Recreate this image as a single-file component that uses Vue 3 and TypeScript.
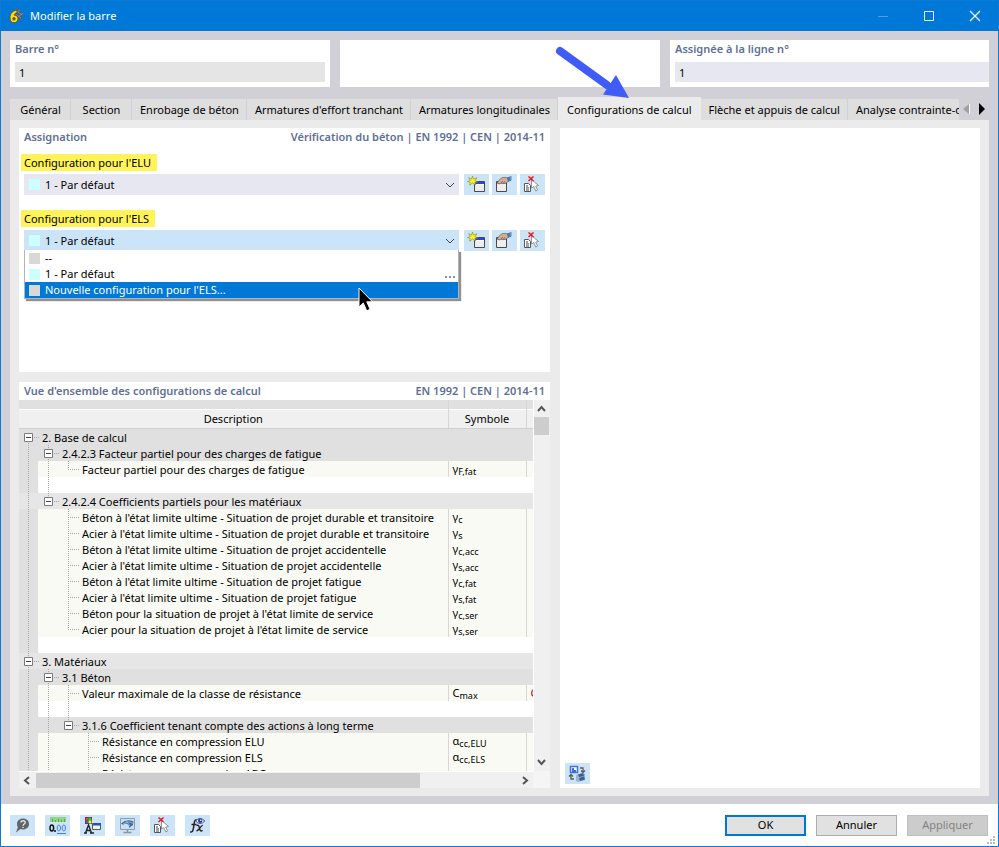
<script setup lang="ts">
import { ref } from 'vue'

type Guide = 'none' | 'trunk' | 'tee' | 'end' | 'root' | 'mid' | 'last'

interface Row {
  kind: 'group' | 'leaf' | 'gap'
  guides: Guide[]
  text?: string
  light?: boolean
  symbol?: string
  sub?: string
  extra?: string
}

const tabs = [
  'Général',
  'Section',
  'Enrobage de béton',
  "Armatures d'effort tranchant",
  'Armatures longitudinales',
  'Configurations de calcul',
  'Flèche et appuis de calcul',
  'Analyse contrainte-déformation',
]
const activeTab = ref(5)

const uls = ref('1 - Par défaut')
const sls = ref('1 - Par défaut')

const options = [
  { label: '--', color: 'grey' },
  { label: '1 - Par défaut', color: 'cyan', more: true },
  { label: "Nouvelle configuration pour l'ELS...", color: 'grey' },
]
const hovered = ref(2)

const rows: Row[] = [
  { kind: 'group', guides: ['root'], text: '2. Base de calcul' },
  { kind: 'group', guides: ['trunk', 'mid'], text: '2.4.2.3 Facteur partiel pour des charges de fatigue' },
  { kind: 'leaf', guides: ['trunk', 'trunk', 'end'], text: 'Facteur partiel pour des charges de fatigue', symbol: 'γ', sub: 'F,fat' },
  { kind: 'gap', guides: ['trunk', 'trunk'] },
  { kind: 'group', guides: ['trunk', 'last'], text: '2.4.2.4 Coefficients partiels pour les matériaux', light: true },
  { kind: 'leaf', guides: ['trunk', 'none', 'tee'], text: "Béton à l'état limite ultime - Situation de projet durable et transitoire", symbol: 'γ', sub: 'c' },
  { kind: 'leaf', guides: ['trunk', 'none', 'tee'], text: "Acier à l'état limite ultime - Situation de projet durable et transitoire", symbol: 'γ', sub: 's' },
  { kind: 'leaf', guides: ['trunk', 'none', 'tee'], text: "Béton à l'état limite ultime - Situation de projet accidentelle", symbol: 'γ', sub: 'c,acc' },
  { kind: 'leaf', guides: ['trunk', 'none', 'tee'], text: "Acier à l'état limite ultime - Situation de projet accidentelle", symbol: 'γ', sub: 's,acc' },
  { kind: 'leaf', guides: ['trunk', 'none', 'tee'], text: "Béton à l'état limite ultime - Situation de projet fatigue", symbol: 'γ', sub: 'c,fat' },
  { kind: 'leaf', guides: ['trunk', 'none', 'tee'], text: "Acier à l'état limite ultime - Situation de projet fatigue", symbol: 'γ', sub: 's,fat' },
  { kind: 'leaf', guides: ['trunk', 'none', 'tee'], text: "Béton pour la situation de projet à l'état limite de service", symbol: 'γ', sub: 'c,ser' },
  { kind: 'leaf', guides: ['trunk', 'none', 'end'], text: "Acier pour la situation de projet à l'état limite de service", symbol: 'γ', sub: 's,ser' },
  { kind: 'gap', guides: ['trunk'] },
  { kind: 'group', guides: ['mid'], text: '3. Matériaux', light: true },
  { kind: 'group', guides: ['trunk', 'mid'], text: '3.1 Béton' },
  { kind: 'leaf', guides: ['trunk', 'trunk', 'tee'], text: 'Valeur maximale de la classe de résistance', symbol: 'C', sub: 'max', extra: 'C' },
  { kind: 'gap', guides: ['trunk', 'trunk', 'trunk'] },
  { kind: 'group', guides: ['trunk', 'trunk', 'last'], text: '3.1.6 Coefficient tenant compte des actions à long terme' },
  { kind: 'leaf', guides: ['trunk', 'trunk', 'none', 'tee'], text: 'Résistance en compression ELU', symbol: 'α', sub: 'cc,ELU' },
  { kind: 'leaf', guides: ['trunk', 'trunk', 'none', 'tee'], text: 'Résistance en compression ELS', symbol: 'α', sub: 'cc,ELS' },
  { kind: 'leaf', guides: ['trunk', 'trunk', 'none', 'tee'], text: 'Résistance en compression ABC', symbol: 'α', sub: 'cc,ABC' },
]

const isToggle = (g: Guide) => g === 'root' || g === 'mid' || g === 'last'
</script>

<template>
  <div class="window">
    <header class="titlebar">
      <svg class="logo" width="16" height="16" viewBox="0 0 16 16">
        <path d="M4 4 10 1l5 4-1 6-4 1z" fill="#36628f" stroke="#52657c" />
        <path d="m5 4 8 6M7 2l7 5M12 2 6 6M15 5l-6 5" stroke="#8aa0b8" stroke-width=".7" />
        <path d="M9 2.500C5 2 2 5.500 2 10c0 3 1.500 4.700 4 4.700S10 13 10 10.600 8.300 7 6.300 7.200C6.500 5.600 7.500 4.800 9 4.700z" fill="#ffd51f" stroke="#6b5200" stroke-width=".9" />
        <circle cx="6" cy="10.800" r="1.300" fill="#2d5e94" stroke="#6b5200" stroke-width=".7" />
      </svg>
      <h1>Modifier la barre</h1>
      <div class="winbuttons">
        <button type="button" aria-label="Réduire" disabled>
          <svg width="12" height="12"><path d="M1 6.500h10" stroke="#4aa0e6" /></svg>
        </button>
        <button type="button" aria-label="Agrandir">
          <svg width="12" height="12"><path d="M1.500 1.500h9v9h-9z" fill="none" stroke="#fff" /></svg>
        </button>
        <button type="button" aria-label="Fermer">
          <svg width="12" height="12"><path d="m1 1 10 10M11 1 1 11" stroke="#fff" stroke-width="1.200" /></svg>
        </button>
      </div>
    </header>

    <main class="body">
      <div class="fields">
        <div class="field">
          <label for="barre">Barre n°</label>
          <input id="barre" type="text" value="1" readonly />
        </div>
        <div class="field"></div>
        <div class="field flush">
          <label for="ligne">Assignée à la ligne n°</label>
          <input id="ligne" class="lilac" type="text" value="1" />
        </div>
      </div>

      <div class="tabrow">
        <div class="tabs" role="tablist">
          <button
            v-for="(tab, i) in tabs"
            :key="tab"
            type="button"
            role="tab"
            class="tab"
            :class="{ active: i === activeTab }"
            :aria-selected="i === activeTab"
            @click="activeTab = i"
          >{{ tab }}</button>
        </div>
        <button type="button" class="tabnav" aria-label="Onglets précédents">
          <svg width="8" height="12"><path d="M6 1v10L0 6z" fill="#a0a0a0" /><path d="M6.500 1v10" stroke="#fff" /></svg>
        </button>
        <button type="button" class="tabnav" aria-label="Onglets suivants">
          <svg width="8" height="12"><path d="M1 0v12l6-6z" fill="#000" /></svg>
        </button>
      </div>

      <div class="content">
        <div class="left">
          <section class="panel">
            <div class="heading">
              <h2>Assignation</h2>
              <h2>Vérification du béton | EN 1992 | CEN | 2014-11</h2>
            </div>

            <div class="setting">
              <label class="mark" for="elu">Configuration pour l'ELU</label>
              <div class="line">
                <div class="combo">
                  <span class="swatch cyan"></span>
                  <select id="elu" v-model="uls"><option>1 - Par défaut</option></select>
                  <svg class="chev" width="10" height="6"><path d="m1 1 4 4 4-4" fill="none" stroke="#444" /></svg>
                </div>
                <button type="button" class="tool" aria-label="Nouvelle configuration"><svg width="19" height="17"><use href="#i-new" /></svg></button>
                <button type="button" class="tool" aria-label="Modifier la configuration"><svg width="19" height="17"><use href="#i-edit" /></svg></button>
                <button type="button" class="tool" aria-label="Sélectionner"><svg width="19" height="17"><use href="#i-pick" /></svg></button>
              </div>
            </div>

            <div class="setting">
              <label class="mark" for="els">Configuration pour l'ELS</label>
              <div class="line">
                <div class="combo open">
                  <span class="swatch cyan"></span>
                  <select id="els" v-model="sls"><option>1 - Par défaut</option></select>
                  <svg class="chev" width="10" height="6"><path d="m1 1 4 4 4-4" fill="none" stroke="#444" /></svg>
                  <ul class="menu" role="listbox" aria-label="Configuration pour l'ELS">
                    <li
                      v-for="(o, i) in options"
                      :key="o.label"
                      role="option"
                      :aria-selected="i === hovered"
                      :class="{ hot: i === hovered }"
                      @mouseenter="hovered = i"
                    >
                      <span class="swatch" :class="o.color"></span>
                      <span class="optlabel">{{ o.label }}</span>
                      <svg v-if="o.more" class="more" width="10" height="2"><path d="M0 0h2v2H0zM4 0h2v2H4zM8 0h2v2H8z" fill="#909090" /></svg>
                    </li>
                  </ul>
                  <svg class="cursor" width="16" height="26" viewBox="0 0 16 26">
                    <path d="M1 1v19l4.300-4 3.400 7.800 3.400-1.500-3.300-7.500H14.500z" fill="#000" stroke="#fff" />
                  </svg>
                </div>
                <button type="button" class="tool" aria-label="Nouvelle configuration"><svg width="19" height="17"><use href="#i-new" /></svg></button>
                <button type="button" class="tool" aria-label="Modifier la configuration"><svg width="19" height="17"><use href="#i-edit" /></svg></button>
                <button type="button" class="tool" aria-label="Sélectionner"><svg width="19" height="17"><use href="#i-pick" /></svg></button>
              </div>
            </div>
          </section>

          <section class="panel overview">
            <div class="heading">
              <h2>Vue d'ensemble des configurations de calcul</h2>
              <h2>EN 1992 | CEN | 2014-11</h2>
            </div>
            <div class="sheet">
              <div class="viewport">
                <table>
                  <colgroup><col /><col class="c-symbol" /><col class="c-rest" /></colgroup>
                  <thead>
                    <tr class="strip"><td></td><td></td><td></td></tr>
                    <tr class="titles"><th scope="col">Description</th><th scope="col">Symbole</th><td></td></tr>
                  </thead>
                  <tbody>
                    <tr v-for="(row, r) in rows" :key="r" :class="[row.kind, { light: row.light }]">
                      <td>
                        <div class="cell">
                          <span v-for="(g, k) in row.guides" :key="k" class="guide" :class="g">
                            <button v-if="isToggle(g)" type="button" class="toggle" :aria-label="'Réduire ' + row.text">
                              <svg width="9" height="9"><path d="M.5.5h8v8h-8z" fill="#fff" stroke="#7a7a7a" /><path d="M2 4.500h5" stroke="#444" /></svg>
                            </button>
                          </span>
                          <span class="name">{{ row.text }}</span>
                        </div>
                      </td>
                      <td class="symbol"><template v-if="row.symbol">{{ row.symbol }}<small>{{ row.sub }}</small></template></td>
                      <td class="extra">{{ row.extra }}</td>
                    </tr>
                  </tbody>
                </table>
              </div>
              <div class="vbar">
                <svg width="15" height="17"><path d="m4 11 3.500-4 3.500 4" fill="none" stroke="#555" stroke-width="2" /></svg>
                <div class="vtrack"><div class="vthumb"></div></div>
                <svg width="15" height="17"><path d="m4 6 3.500 4L11 6" fill="none" stroke="#555" stroke-width="2" /></svg>
              </div>
              <div class="hbar">
                <svg width="17" height="15"><path d="M10 4 6 7.500l4 3.500" fill="none" stroke="#555" stroke-width="2" /></svg>
                <div class="htrack"><div class="hthumb"></div></div>
                <svg width="17" height="15"><path d="m7 4 4 3.500L7 11" fill="none" stroke="#555" stroke-width="2" /></svg>
              </div>
              <div class="corner"></div>
            </div>
          </section>
        </div>

        <section class="panel preview">
          <button type="button" class="tool" aria-label="Changer de vue">
            <svg width="19" height="17">
              <path d="M2.500 1.500h7v6h-7z" fill="#fff" stroke="#3f6fe0" stroke-width="1.500" />
              <path d="M4 3h2v2h2v2H4z" fill="#3f6fe0" />
              <path d="M12 3h3v4M13 5.500l2 2 2-2M6 14H3v-4M1 11.500l2-2 2 2" fill="none" stroke="#5c5c5c" stroke-width="1.300" />
              <path d="m8 10 7-2 2 1v6l-7 2-2-1z" fill="#9db3cf" />
              <path d="m10 9.500 5-1.500 1 3-5 1zM11 13l5-1.500 1 3-5 1.500z" fill="#3d5f8c" />
            </svg>
          </button>
        </section>
      </div>
    </main>

    <footer class="footer">
      <div class="icons">
        <button type="button" class="tool" aria-label="Aide">
          <svg width="19" height="17">
            <path d="M10 1.500c3.500 0 6 2.300 6 5.500s-2.700 5.500-6 5.500c-.9 0-1.800-.1-2.500-.4L3 15.500 4.800 10.500C4.300 9.500 4 8.300 4 7c0-3.200 2.700-5.500 6-5.500z" fill="#646464" />
            <path d="M8 5.600c0-2.600 4.200-2.400 4.200-.1 0 1.600-2.100 1.500-2.100 3.200M10.100 9.800v1.300" fill="none" stroke="#d5e5f2" stroke-width="1.400" />
          </svg>
        </button>
        <button type="button" class="tool" aria-label="Unités">
          <svg width="19" height="17">
            <path d="M2 0h16v5H2z" fill="#92d586" /><path d="M4.500 2v3M7.500 3v2M10.500 2v3M13.500 3v2M16.500 2v3" stroke="#55a74b" />
            <path d="M3.800 8C1.400 8 1.400 14 3.800 14s2.400-6 0-6z" fill="none" stroke="#111" stroke-width="1.500" />
            <path d="M7 13v2" stroke="#111" stroke-width="1.500" />
            <path d="M10.800 8C8.600 8 8.600 14 10.800 14s2.200-6 0-6zM15.800 8c-2.200 0-2.200 6 0 6s2.200-6 0-6z" fill="none" stroke="#487bea" />
            <path d="M9 16.500h9" stroke="#487bea" />
          </svg>
        </button>
        <button type="button" class="tool" aria-label="Couleurs">
          <svg width="19" height="17">
            <path d="M2 0h7v7H2z" fill="#333" />
            <path d="M2.500.5h3v3h-3z" fill="#f33" /><path d="M5.500.5h3v3h-3z" fill="#32c532" />
            <path d="M2.500 3.500h3v3h-3z" fill="#36f" /><path d="M5.500 3.500h3v3h-3z" fill="#fe2" />
            <path d="M2.500 16 5.500 8l3 8M1 16h3M7 16h4M4 13.500h3" fill="none" stroke="#222" stroke-width="1.400" />
            <path d="M9.500 6.500h8v6h-8z" fill="#f2f2f2" stroke="#555" /><path d="M10 6h8v2.500h-8z" fill="#294fba" />
          </svg>
        </button>
        <button type="button" class="tool" aria-label="Affichage">
          <svg width="19" height="17">
            <path d="M2.500 1.500h14v11h-14z" fill="#c7e0f3" stroke="#929ba3" />
            <path d="M9.500 13v3M5.500 15.500h8" stroke="#8c949b" stroke-width="1.500" />
            <path d="M3 6.500Q9 1 15.500 4.500L15 8l-4 3q1-3-3-4.500-2 0-3 1.500z" fill="#3f6b9b" />
            <path d="M4.500 7.500Q10 3 15 6.500M8 3.500l4 5.500" stroke="#b7d2e9" fill="none" stroke-width=".7" />
          </svg>
        </button>
        <button type="button" class="tool" aria-label="Sélectionner dans la vue"><svg width="19" height="17"><use href="#i-pick" /></svg></button>
        <button type="button" class="tool" aria-label="Formules">
          <svg width="19" height="17">
            <path d="M9 3.200C6.800 2 6.400 4.500 6 7.500c-.5 4-1 8.500-3.800 7.300M3.500 7.500h5" fill="none" stroke="#222" stroke-width="1.500" />
            <path d="M8.500 8.500c2-1 2.500.5 3 2.800s1.200 3.500 3 2M14.800 8.400c-2-.6-3.300 5.500-6.300 5.400" fill="none" stroke="#222" stroke-width="1.400" />
            <path d="M7.500 4Q12 -1 16.800 4 12 9 7.500 4z" fill="#e9ecfa" stroke="#4c5080" />
            <circle cx="12.200" cy="3.800" r="2.200" fill="#273fae" /><circle cx="12.800" cy="3.200" r=".8" fill="#fff" />
          </svg>
        </button>
      </div>
      <div class="actions">
        <button type="button" class="btn primary">OK</button>
        <button type="button" class="btn">Annuler</button>
        <button type="button" class="btn" disabled>Appliquer</button>
      </div>
      <svg class="grip" width="8" height="8"><path d="M6 0h2v2H6zM3 3h2v2H3zM6 3h2v2H6zM0 6h2v2H0zM3 6h2v2H3zM6 6h2v2H6z" fill="#bcbcbc" /></svg>
    </footer>

    <svg class="pointer" width="76" height="56" viewBox="0 0 76 56">
      <path d="m6 7 47 34" stroke="#405cf8" stroke-width="8" stroke-linecap="round" />
      <path d="M75 54 49 50.500 62 31z" fill="#405cf8" />
    </svg>

    <svg class="defs" width="0" height="0" aria-hidden="true">
      <symbol id="i-new" viewBox="0 0 19 17">
        <path d="M7.500 5.500h10v10h-10z" fill="#eee" stroke="#4a4a4a" />
        <path d="M8 6h9v2H8z" fill="#2943e9" /><path d="M8 8.500h9" stroke="#fff" />
        <path d="M5.500 0 6.600 3 10 1.700 8 4.700l3 1.200-3.200.5L9 9 5.500 7 2.600 9.300l.6-3L.5 5.500l2.700-1L1.700 1.800l2.800 1.300z" fill="#f7f218" stroke="#777526" stroke-width=".5" />
      </symbol>
      <symbol id="i-edit" viewBox="0 0 19 17">
        <path d="M1.500 5.500h10v10h-10z" fill="#eee" stroke="#4a4a4a" /><path d="M2 6h9v1.500H2z" fill="#3650c8" />
        <path d="M2.500 6.500C4 4 6 1.500 9 1.300l4 .7.500 3.500L11 7 9 7.500 7 7l-2 .8-2-.3z" fill="#d3ae94" stroke="#756052" stroke-width=".7" />
        <path d="m6 7 2-2M8.500 7 10 5.200" stroke="#756052" stroke-width=".8" />
        <path d="m12 1.500 4-1.500v5l-3 .5z" fill="#4577b9" /><path d="M15.500 0H17v4.500h-1.500z" fill="#8db5dc" />
      </symbol>
      <symbol id="i-pick" viewBox="0 0 19 17">
        <path d="M1.500 7.500h4l2 2v6h-6z" fill="#fff" stroke="#555" /><path d="M3 10h2M3 12h3M3 14h3" stroke="#444" />
        <path d="M8.500 3.500V12l2.300-1.500 2 4.500 1.800-1-2-4 3-.5z" fill="#fff" stroke="#888" stroke-width=".9" />
        <path d="m5.500.5 5 4.500M10.500.5l-5 4.500" stroke="#e8191f" stroke-width="1.500" />
      </symbol>
    </svg>
  </div>
</template>

<style>
body {
  background: #fff;
}
</style>

<style scoped>
* {
  box-sizing: border-box;
}
.window {
  position: relative;
  display: flex;
  flex-direction: column;
  height: 100vh;
  border: 1px solid #0f7ad4;
  background: #fff;
  color: #000;
  font: 11px/16px 'Noto Sans', 'Open Sans', sans-serif;
  overflow: hidden;
}
button,
input,
select {
  font: inherit;
  color: inherit;
  margin: 0;
  border: 0;
  padding: 0;
  background: none;
  border-radius: 0;
}
svg {
  display: block;
  flex: none;
}
h1,
h2 {
  margin: 0;
  font-size: 11px;
  font-weight: 600;
}
.titlebar {
  display: flex;
  align-items: center;
  flex: none;
  height: 30px;
  padding-left: 7px;
  background: #0078d7;
  color: #fff;
}
.titlebar h1 {
  flex: 1;
  margin-left: 6px;
  font-weight: 400;
}
.winbuttons {
  display: flex;
}
.winbuttons button {
  display: flex;
  align-items: center;
  justify-content: center;
  width: 46px;
  height: 28px;
}
.body {
  display: flex;
  flex-direction: column;
  flex: 1;
  min-height: 0;
  padding: 9px 9px 8px;
  background: #d1d0d6;
}
.fields {
  display: grid;
  grid-template-columns: 320fr 320fr 319fr;
  gap: 10px;
}
.field {
  display: flex;
  flex-direction: column;
  height: 47px;
  padding: 1px 5px 5px;
  background: #fff;
}
.field.flush {
  padding-right: 0;
}
.field label,
.heading {
  color: #5f6f95;
  font-weight: 600;
}
.field input {
  width: 100%;
  height: 20px;
  margin-top: 5px;
  padding: 1px 4px 0;
  background: #e5e5e5;
}
.field input.lilac {
  background: #e7e7f1;
}
.tabrow {
  display: flex;
  align-items: flex-end;
  margin-top: 10px;
  height: 23px;
}
.tabs {
  display: flex;
  align-items: flex-end;
  flex: 1;
  min-width: 0;
  overflow: hidden;
}
.tab {
  flex: none;
  min-width: 61px;
  height: 21px;
  padding: 0 7px 0 8px;
  border-right: 1px solid #d1d0d6;
  background: #dedede;
  white-space: nowrap;
}
.tab.active {
  height: 23px;
  padding: 2px 9px 0;
  border-right: 0;
  background: #ebebeb;
}
.tabnav {
  display: flex;
  align-items: center;
  justify-content: center;
  width: 15px;
  height: 23px;
}
.content {
  display: grid;
  grid-template-columns: 531fr 420fr;
  gap: 10px;
  flex: 1;
  min-height: 0;
  padding: 8px 9px;
  background: #ebebeb;
}
.left {
  display: grid;
  grid-template-rows: 244px minmax(0, 1fr);
  gap: 10px;
  min-width: 0;
  min-height: 0;
}
.panel {
  min-width: 0;
  background: #fff;
}
.heading {
  display: flex;
  justify-content: space-between;
  height: 18px;
  padding: 1px 5px;
  white-space: nowrap;
}
.setting {
  padding: 8px 5px 7px;
}
.mark {
  display: block;
  width: fit-content;
  margin-left: -3px;
  padding: 1px 6px 0 3px;
  height: 17px;
  background: #fff35a;
}
.line {
  display: flex;
  gap: 3px;
  margin-top: 3px;
}
.combo {
  position: relative;
  display: flex;
  align-items: center;
  flex: 1;
  height: 21px;
  margin-right: 2px;
  padding: 0 4px 0 5px;
  background: #e7e7f1;
}
.combo.open {
  background: #cce4f7;
}
.combo select {
  flex: 1;
  height: 20px;
  padding-left: 5px;
  appearance: none;
  outline: 0;
}
.swatch {
  flex: none;
  width: 11px;
  height: 11px;
}
.cyan {
  background: #ccffff;
}
.grey {
  background: #d8d8d8;
}
.menu {
  position: absolute;
  top: 20px;
  left: 0;
  right: 0;
  z-index: 2;
  margin: 0;
  padding: 0;
  list-style: none;
  background: #fff;
  border: 1px solid #b4b4b4;
  border-top: 0;
  box-shadow: 2px 2px 1px #909090;
}
.menu li {
  display: flex;
  align-items: center;
  height: 16px;
  padding: 0 3px 0 4px;
}
.menu li.hot {
  background: #0078d7;
  color: #fff;
}
.optlabel {
  flex: 1;
  margin-left: 5px;
}
.more {
  align-self: flex-end;
  margin-bottom: 4px;
}
.cursor {
  position: absolute;
  top: 57px;
  left: 334px;
  z-index: 3;
}
.tool {
  display: flex;
  align-items: center;
  justify-content: center;
  width: 25px;
  height: 21px;
  background: #cce4f7;
}
.overview {
  display: flex;
  flex-direction: column;
  min-height: 0;
}
.sheet {
  display: grid;
  grid-template-columns: minmax(0, 1fr) 17px;
  grid-template-rows: minmax(0, 1fr) 17px;
  flex: 1;
  min-height: 0;
}
.viewport {
  overflow: hidden;
}
table {
  width: 100%;
  table-layout: fixed;
  border-collapse: collapse;
}
.c-symbol {
  width: 78px;
}
.c-rest {
  width: 7px;
}
th,
td {
  padding: 0;
  font-weight: 400;
  white-space: nowrap;
  overflow: hidden;
}
.strip td {
  height: 9px;
  background: #e0e0e0;
}
.titles th,
.titles td {
  height: 19px;
  background: #f0f0f0;
  border-top: 1px solid #fff;
  border-bottom: 1px solid #cfcfcf;
}
td + td,
th + th,
th + td {
  border-left: 1px solid #d6d6d6;
}
.cell {
  display: flex;
  height: 16px;
  line-height: 18px;
}
tbody td {
  height: 16px;
}
.group td {
  background: #e0e0e0;
  border-left: 0;
}
.group.light td {
  background: #e6e6e6;
}
.gap td {
  border-left: 0;
}
.leaf td {
  background: #f9faf4;
}
.guide {
  position: relative;
  width: 20px;
  height: 16px;
}
.leaf .guide:first-child,
.gap .guide:first-child {
  background-color: #e0e0e0;
  box-shadow: inset -1px 0 #f9faf4;
}
.guide::before {
  content: '';
  position: absolute;
  left: 9px;
  top: 0;
  width: 1px;
  height: 16px;
  background: repeating-linear-gradient(#a8a8a8 0 1px, transparent 1px 2px);
}
.guide.none::before {
  display: none;
}
.guide.end::before,
.guide.last::before {
  height: 8px;
}
.guide.root::before {
  top: 8px;
  height: 8px;
}
.guide.tee::after,
.guide.end::after,
.guide.root::after,
.guide.mid::after,
.guide.last::after {
  content: '';
  position: absolute;
  left: 9px;
  top: 8px;
  width: 11px;
  height: 1px;
  background: repeating-linear-gradient(90deg, #a8a8a8 0 1px, transparent 1px 2px);
}
.toggle {
  position: absolute;
  left: 5px;
  top: 4px;
  z-index: 1;
}
.name {
  margin-left: 3px;
}
.symbol {
  padding-left: 4px;
  line-height: 16px;
}
.symbol small {
  position: relative;
  top: 2px;
  font-size: 9px;
  line-height: 8px;
}
.extra {
  padding-left: 4px;
  color: #8a1010;
}
.vbar {
  display: flex;
  flex-direction: column;
  background: #f0f0f0;
  border-left: 1px solid #fff;
}
.vtrack {
  flex: 1;
  width: 15px;
}
.vthumb {
  height: 18px;
  background: #cdcdcd;
}
.hbar {
  display: flex;
  align-items: center;
  border-top: 1px solid #fff;
  background: #f0f0f0;
}
.htrack {
  flex: 1;
}
.hthumb {
  width: 80%;
  height: 15px;
  background: #cdcdcd;
}
.corner {
  background: #f5f5f5;
}
.preview {
  display: flex;
  align-items: flex-end;
  padding: 4px 5px;
}
.footer {
  position: relative;
  display: flex;
  align-items: center;
  justify-content: space-between;
  flex: none;
  height: 42px;
  padding: 0 10px 0 9px;
}
.icons,
.actions {
  display: flex;
  gap: 10px;
}
.btn {
  width: 81px;
  height: 21px;
  border: 1px solid #adadad;
  background: #e1e1e1;
}
.btn.primary {
  border: 2px solid #0078d7;
}
.btn:disabled {
  background: #ccc;
  border-color: #bfbfbf;
  color: #838383;
}
.grip {
  position: absolute;
  right: 3px;
  bottom: 2px;
}
.pointer {
  position: absolute;
  left: 553px;
  top: 43px;
  pointer-events: none;
}
.defs {
  position: absolute;
}
</style>
